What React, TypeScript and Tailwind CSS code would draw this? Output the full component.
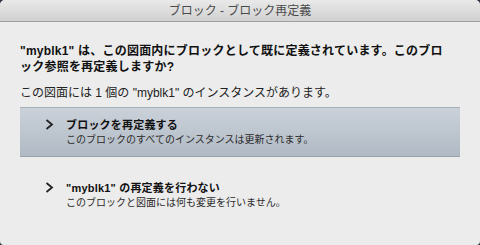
import React from 'react'

function Chevron() {
  return (
    <svg width="9" height="11" viewBox="0 0 9 11" className="shrink-0">
      <polyline points="1.5,1 7,5.5 1.5,10" fill="none" stroke="#222" strokeWidth="1.8" />
    </svg>
  )
}

type OptionProps = {
  title: string
  desc: string
  active?: boolean
}

function Option({ title, desc, active }: OptionProps) {
  return (
    <div
      className={
        active
          ? 'h-[50px] flex flex-col justify-center border-y border-t-[#a8b0ba] border-b-[#98a1ac] bg-gradient-to-b from-[#cad1d9] to-[#b1bac4]'
          : 'h-[50px] flex flex-col justify-center border-y border-transparent'
      }
    >
      <div className="flex items-center pl-[25px] gap-[12px]">
        <Chevron />
        <span className="text-[11px] leading-[14px] font-bold text-[#111] tracking-[0.2px]">{title}</span>
      </div>
      <div className="pl-[46px] text-[10px] leading-[15px] text-[#2b2b2b]">{desc}</div>
    </div>
  )
}

export default function App() {
  return (
    <div className="w-[480px] h-[245px] bg-[#2e3340] font-['Liberation_Sans','Noto_Sans_CJK_JP',sans-serif]">
      <div className="h-full flex flex-col overflow-hidden rounded-t-[5px] rounded-b-[4px] bg-[#ececec]">
        <div className="h-[22px] shrink-0 flex items-center justify-center border-b border-[#a0a0a0] bg-gradient-to-b from-[#e9e9e9] to-[#d1d1d1] text-[12px] text-[#4a4a4a]">
          ブロック - ブロック再定義
        </div>
        <div className="px-5 pt-[21px]">
          <p className="w-[432px] text-[12px] leading-[16px] font-bold tracking-[0.22px] text-[#111]">
            "myblk1" は、この図面内にブロックとして既に定義されています。このブロック参照を再定義しますか?
          </p>
          <p className="mt-[10px] text-[12px] leading-[16px] text-[#222]">
            この図面には 1 個の "myblk1" のインスタンスがあります。
          </p>
          <div className="mt-[6px] flex flex-col gap-[13px]">
            <Option
              active
              title="ブロックを再定義する"
              desc="このブロックのすべてのインスタンスは更新されます。"
            />
            <Option
              title={'"myblk1" の再定義を行わない'}
              desc="このブロックと図面には何も変更を行いません。"
            />
          </div>
        </div>
      </div>
    </div>
  )
}
